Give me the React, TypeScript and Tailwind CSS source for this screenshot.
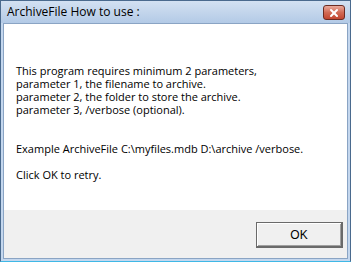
import { X } from 'lucide-react';

const message = [
    'This program requires minimum 2 parameters,',
    'parameter 1, the filename to archive.',
    'parameter 2, the folder to store the archive.',
    'parameter 3, /verbose (optional).',
    '',
    '',
    'Example ArchiveFile C:\\myfiles.mdb D:\\archive /verbose.',
    '',
    'Click OK to retry.',
].join('\n');

export default function App() {
    return (
        <div className="w-[354px] h-[262px] bg-white overflow-hidden">
            <div className="w-[351px] h-[262px] flex flex-col border border-[#4a6a8e] border-b-[#3fb8e6] bg-[#c4d7ee]">
                {/* title bar */}
                <div className="h-[22px] flex items-center justify-between pl-[6px] pr-[6px] bg-gradient-to-b from-[#d3e1f2] to-[#b3cae6]">
                    <span className="text-[12px] text-black leading-none font-['Open_Sans',sans-serif]">
                        ArchiveFile How to use :
                    </span>
                    <div className="self-start mt-[4px] w-[22px] h-[15px] mr-[-1px] rounded-[3px] border border-[#6b2b22] bg-gradient-to-b from-[#e9a99c] via-[#d16a55] to-[#c2452f] flex items-center justify-center">
                        <X className="w-3 h-3 text-white" strokeWidth={4} />
                    </div>
                </div>

                {/* client */}
                <div className="flex-1 flex flex-col mx-[2px] mb-[2px] border border-[#8aa4c4]">
                    <div className="flex-1 bg-white pl-[12px] pt-[40px] text-[11px] leading-[13px] text-black whitespace-pre-line font-['Open_Sans',sans-serif]">
                        {message}
                    </div>
                    <div className="h-[48px] bg-[#f0f0f0] flex items-start justify-end pr-[4px] pt-[12px]">
                        <button className="w-[87px] h-[26px] bg-[#f0f0f0] border border-[#6a6a6a] border-r-2 border-b-2 shadow-[inset_1px_1px_0_#ffffff,inset_-1px_-1px_0_#a0a0a0] flex items-center justify-center text-[12px] text-black font-['Liberation_Sans',sans-serif]">
                            OK
                        </button>
                    </div>
                </div>
            </div>
        </div>
    );
}
